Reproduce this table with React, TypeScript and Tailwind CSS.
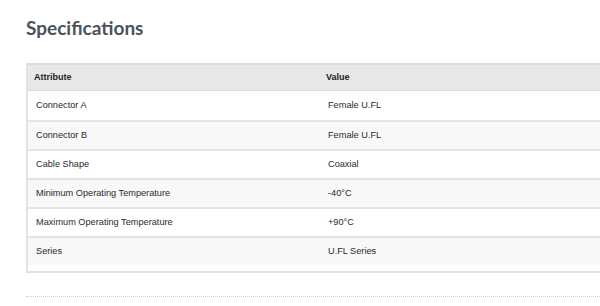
import React from 'react';

const specs = [
  { attr: 'Connector A', value: 'Female U.FL' },
  { attr: 'Connector B', value: 'Female U.FL' },
  { attr: 'Cable Shape', value: 'Coaxial' },
  { attr: 'Minimum Operating Temperature', value: '-40°C' },
  { attr: 'Maximum Operating Temperature', value: '+90°C' },
  { attr: 'Series', value: 'U.FL Series' },
];

const App: React.FC = () => {
  return (
    <div className="w-[600px] h-[306px] overflow-hidden bg-white pl-[26px] pt-[15px] font-['Liberation_Sans',Arial,sans-serif]">
      <h2 className="text-[19px] leading-[26px] font-bold text-[#4a525c] font-['Lato','Open_Sans',sans-serif]">
        Specifications
      </h2>

      <div className="mt-[22px] w-[620px] border-l-2 border-[#e2e2e2] border-b-2 pb-[6px]">
        <div className="flex h-[28px] items-center bg-[#e8e8e8] border-t-2 border-b border-[#dcdcdc] text-[9px] font-bold text-[#222]">
          <div className="w-[291px] pl-[6px]">Attribute</div>
          <div className="pl-[7px]">Value</div>
        </div>
        {specs.map((row, i) => (
          <div
            key={row.attr}
            className={`flex h-[29px] items-center text-[9.2px] text-[#2a2a2a] ${i > 0 ? 'border-t-2 border-[#e4e4e4]' : ''} ${i % 2 === 0 ? 'bg-white' : 'bg-[#f8f8f8]'}`}
          >
            <div className="w-[291px] pl-[8px]">{row.attr}</div>
            <div className="pl-[9px]">{row.value}</div>
          </div>
        ))}
      </div>

      <div className="mt-[23px] w-[600px] border-t border-dotted border-[#cfcfcf]" />
    </div>
  );
};

export default App;
